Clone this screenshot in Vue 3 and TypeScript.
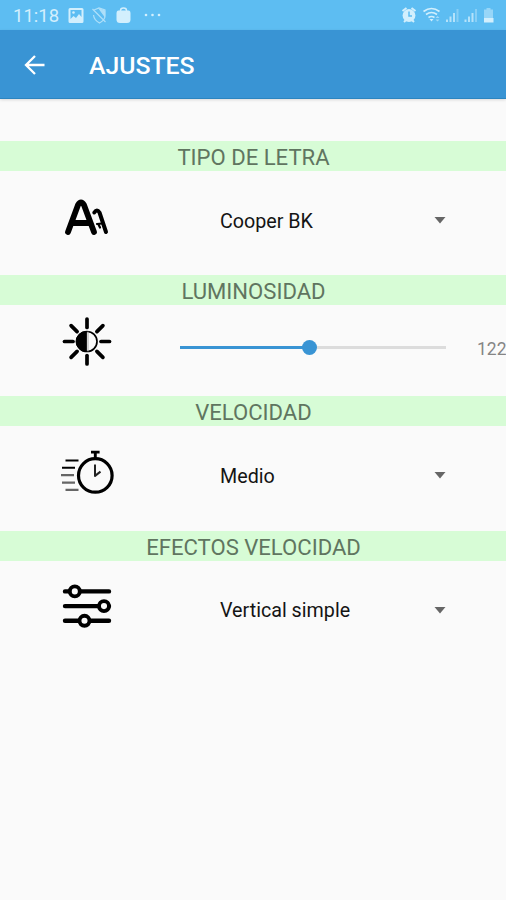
<script setup lang="ts">
import { ref } from 'vue'

type IconName = 'font' | 'brightness' | 'timer' | 'sliders'

interface Setting {
  title: string
  icon: IconName
  value?: string
}

const settings: Setting[] = [
  { title: 'TIPO DE LETRA', icon: 'font', value: 'Cooper BK' },
  { title: 'LUMINOSIDAD', icon: 'brightness' },
  { title: 'VELOCIDAD', icon: 'timer', value: 'Medio' },
  { title: 'EFECTOS VELOCIDAD', icon: 'sliders', value: 'Vertical simple' },
]

const brightness = ref(122)
const maxBrightness = 250
const rays = [0, 45, 90, 135, 180, 225, 270, 315]
</script>

<template>
  <div class="screen">
    <div class="status">
      <span class="clock">11:18</span>
      <svg class="left-icons" width="100" height="30" viewBox="64 0 100 30">
        <path fill-rule="evenodd" d="M70 8h12q1.500 0 1.500 1.500v12q0 1.500-1.500 1.500h-12q-1.500 0-1.500-1.500v-12q0-1.500 1.500-1.500zM70.500 10v9l3-3 2.500 2 3-4 2.500 3v-7z" />
        <circle cx="73.500" cy="12.500" r="1.300" />
        <g fill="none" stroke="currentColor" stroke-width="1.200" opacity=".7">
          <path d="M94 10l5-2 6 2v6q0 4-5.500 7q-5.500-3-6-8M92.500 9l13 13" />
          <path d="M99.500 9l5 2v5z" fill="currentColor" />
        </g>
        <path d="M118.500 10.500h10q2 0 2 3v6q0 3.500-3.500 3.500h-7q-3.500 0-3.500-3.500v-6q0-3 2-3z" />
        <path d="M120.500 12v-1.500q0-2.500 3-2.500t3 2.500v1.500" fill="none" stroke="currentColor" stroke-width="1.500" />
        <circle cx="146" cy="15" r="1.300" /><circle cx="152.500" cy="15" r="1.300" /><circle cx="159" cy="15" r="1.300" />
      </svg>
      <svg class="right-icons" width="106" height="30" viewBox="400 0 106 30">
        <circle cx="409" cy="15.500" r="6.400" />
        <path d="M402.500 11l4-3M415.500 11l-4-3M404 22l2-2M414 22l-2-2" fill="none" stroke="currentColor" stroke-width="2" />
        <path d="M409 11.500v4.500h3" class="cut" />
        <g fill="none" stroke="currentColor" stroke-width="1.600">
          <path d="M423.500 11.500q8-6 16 0M426 14.500q5.500-4 11 0M428.500 17.500q3-2 6 0" />
        </g>
        <path d="M429.500 19h4l-2 2.500z" />
        <path opacity=".6" d="M435.500 18l2-2 2 2zM435.500 19.500h4l-2 2z" />
        <g opacity=".75">
          <path d="M446 19.500h2v2.500h-2zM449.500 16.500h2v5.500h-2zM453 13h2v9h-2z" />
          <path d="M464.500 19.500h2v2.500h-2zM468 16.500h2v5.500h-2zM471.500 13h2v9h-2z" />
          <path opacity=".5" d="M456.500 9h2v13h-2zM475 9h2v13h-2z" />
        </g>
        <path opacity=".5" d="M486.500 8h4v1.500h2.500v9h-9v-9h2.500z" />
        <path d="M484 18h9.500v4.500h-9.500z" />
      </svg>
    </div>

    <header class="toolbar">
      <svg class="back" width="24" height="24" viewBox="0 0 24 24">
        <path d="M21.500 12H3.500M12 3L3 12l9 9" />
      </svg>
      <h1>AJUSTES</h1>
    </header>

    <main>
      <section v-for="s in settings" :key="s.title">
        <h2>{{ s.title }}</h2>
        <div class="row" :class="{ slim: !s.value }">
          <svg v-if="s.icon === 'font'" class="icon" width="75" height="60" viewBox="0 -3.500 75 60">
            <path d="M18 41.500L28 14.500q3-5 6 0L44 41.500M24 32.500h14.500" stroke-width="5.800" />
            <path d="M44.300 22q2.700-4 5.200 0L56 41.500" stroke-width="4" />
            <path d="M47 33.500l5-.5M48.500 34l1.500 3" stroke-width="2.200" />
          </svg>

          <svg v-else-if="s.icon === 'brightness'" class="icon" width="75" height="60" viewBox="0 3 75 60">
            <path v-for="angle in rays" :key="angle" d="M37 17.500V9" stroke-width="3.700" :transform="`rotate(${angle} 37 31.500)`" />
            <circle cx="37" cy="31.500" r="10" stroke-width="1.700" />
            <path d="M36 21.500a10 10 0 0 0 0 20z" fill="#000" stroke-width="1" />
            <path d="M38 22v19" stroke="#aaa" stroke-width="1" />
          </svg>

          <svg v-else-if="s.icon === 'timer'" class="icon" width="75" height="60" viewBox="0 1.600 75 60">
            <g class="flat">
              <circle cx="45.300" cy="35" r="16.800" stroke-width="3.200" />
              <path d="M45.300 18v-6M41 11.700h8.600" stroke-width="2.900" />
              <path d="M45 24v11.500l5.500-4.300" stroke="#222" stroke-width="2" />
              <path d="M15.500 20h13M12 27.300h13" stroke-width="2" />
              <path d="M11 34.800h13M12 42.300h13M15.500 49.500h13" stroke="#666" stroke-width="2.300" />
            </g>
          </svg>

          <svg v-else class="icon" width="75" height="60" viewBox="0 .9 75 60">
            <path d="M15 16.300h44M15 31h44M15 45.700h44" stroke-width="4.400" />
            <g class="knobs">
              <circle cx="24.800" cy="16.300" r="5" />
              <circle cx="54" cy="31" r="5" />
              <circle cx="34.500" cy="45.700" r="5" />
            </g>
          </svg>

          <button v-if="s.value" class="select" type="button">
            <span>{{ s.value }}</span>
            <svg width="12" height="7" viewBox="0 0 12 7"><path d="M.5 0h11L6 6.500z" /></svg>
          </button>

          <div v-else class="brightness">
            <div class="track">
              <div class="filled" :style="{ width: `${(brightness / maxBrightness) * 100}%` }"></div>
              <div class="thumb"></div>
            </div>
            <span class="amount">{{ brightness }}</span>
          </div>
        </div>
      </section>
    </main>
  </div>
</template>

<style>
body { margin: 0; background: #fafafa; }
</style>

<style scoped>
.screen {
  height: 900px;
  overflow: hidden;
  background: #fafafa;
  font-family: Roboto, sans-serif;
}
.status {
  display: flex;
  height: 30px;
  background: #5dbdf2;
  color: #d2effd;
}
.status svg { fill: currentColor; }
.clock {
  width: 51px;
  padding-left: 13px;
  font-size: 18.500px;
  line-height: 32px;
}
.right-icons { margin-left: auto; }
.cut { fill: none; stroke: #5dbdf2; stroke-width: 1.500px; }
.toolbar {
  display: flex;
  align-items: center;
  height: 69px;
  box-sizing: border-box;
  padding-left: 23px;
  background: #3994d4;
  border-bottom: 1px solid #2c85c0;
  box-shadow: 0 1px 3px #0002;
  color: #fff;
}
.back {
  margin: 1px 42px 0 0;
  fill: none;
  stroke: #fff;
  stroke-width: 2.300px;
}
h1 {
  margin: 4px 0 0;
  font-size: 24.800px;
  font-weight: 500;
  line-height: 30px;
}
main { padding-top: 42px; }
h2 {
  height: 30px;
  margin: 0;
  padding-left: 1px;
  background: #d7fcd6;
  color: #607560;
  font-size: 22.100px;
  font-weight: 400;
  line-height: 33px;
  text-align: center;
}
.row {
  display: flex;
  align-items: center;
  height: 104.300px;
  box-sizing: border-box;
  padding: 0 0 5px 50px;
}
.row.slim {
  height: 91px;
  padding-bottom: 7px;
}
.icon {
  flex: none;
  margin-bottom: 8px;
  fill: none;
  stroke: #000;
  stroke-linecap: round;
  stroke-linejoin: round;
}
.flat { stroke-linecap: butt; }
.knobs { fill: #fafafa; stroke-width: 3.900px; }
.select {
  display: flex;
  align-items: center;
  justify-content: space-between;
  width: 226px;
  margin-left: 95px;
  padding: 0;
  border: 0;
  background: none;
  color: #141414;
  font: 400 19.700px/26px Roboto, sans-serif;
  text-align: left;
}
.select span { padding-top: 1.800px; }
.select svg { fill: #666; }
.brightness {
  display: flex;
  flex: 1;
  align-items: center;
  margin-left: 55px;
}
.track {
  display: flex;
  align-items: center;
  flex: none;
  width: 266px;
  height: 3px;
  background: #dcdcdc;
}
.filled { height: 3px; background: #3994d4; }
.thumb {
  flex: none;
  width: 15px;
  height: 15px;
  margin-left: -8px;
  border-radius: 50%;
  background: #3994d4;
}
.amount {
  margin: 3px 0 0 31px;
  color: #858585;
  font-size: 17.500px;
  line-height: 20px;
}
</style>
